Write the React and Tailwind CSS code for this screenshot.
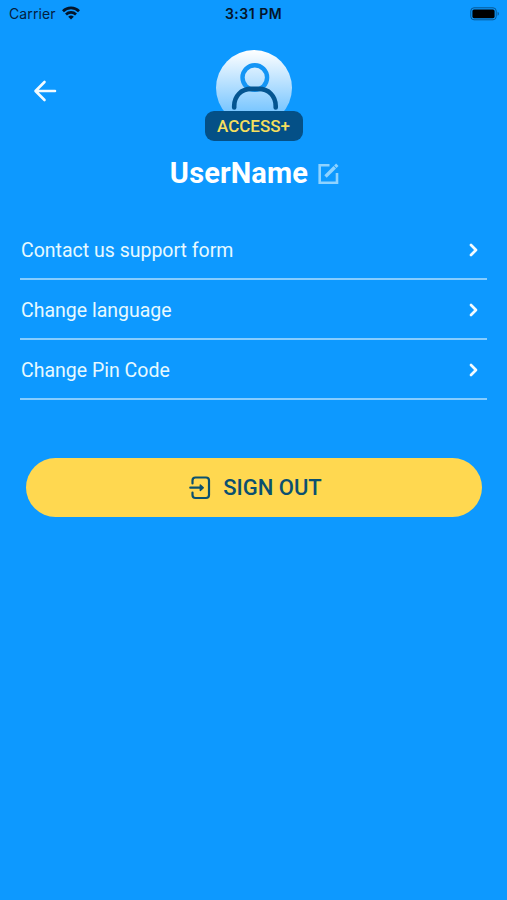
import React from "react";

const menuItems = [
    { id: "contact", label: "Contact us support form" },
    { id: "language", label: "Change language" },
    { id: "pin", label: "Change Pin Code" },
];

const WifiIcon = () => (
    <svg width="18" height="14" viewBox="0 0 18 14" fill="none" stroke="#04152a" strokeWidth="2.7">
        <path d="M1 5.2a11.3 11.3 0 0 1 16 0" />
        <path d="M4 8.5a7.1 7.1 0 0 1 10 0" />
        <path d="M9 13.6 6.2 10.8a4 4 0 0 1 5.6 0z" fill="#04152a" stroke="none" />
    </svg>
);

const BatteryIcon = () => (
    <svg width="30" height="14" viewBox="0 0 30 14" fill="none">
        <rect x="0.8" y="0.8" width="25.4" height="12" rx="3.2" stroke="#075794" strokeWidth="1" />
        <rect x="2.4" y="2.4" width="22.2" height="8.8" rx="1.6" fill="#000" />
        <path d="M27.6 4.8c1.7.6 1.7 3.4 0 4z" fill="#075794" />
    </svg>
);

const BackIcon = () => (
    <svg width="24" height="22" viewBox="0 0 24 22" fill="none" stroke="#f2fbff" strokeWidth="2.6" strokeLinecap="round" strokeLinejoin="round">
        <path d="M22 11H2.6M11.5 2 2.5 11l9 9" />
    </svg>
);

const Avatar = () => (
    <svg width="76" height="76" viewBox="0 0 76 76" fill="none">
        <defs>
            <linearGradient id="avatar-bg" x1="0" y1="0" x2="0" y2="1">
                <stop offset="0" stopColor="#fff" />
                <stop offset="1" stopColor="#5bb9ff" />
            </linearGradient>
        </defs>
        <circle cx="38" cy="38" r="38" fill="url(#avatar-bg)" />
        <circle cx="38.8" cy="27.6" r="12.3" stroke="#1495f5" strokeWidth="4.4" />
        <path d="M18.2 57.5v-1.4c0-10 7-17.2 17-17.2h7.5c10 0 17 7.2 17 17.2v1.4" stroke="#045591" strokeWidth="4.6" strokeLinecap="round" />
    </svg>
);

const EditIcon = () => (
    <svg width="22" height="22" viewBox="0 0 22 22" fill="none" stroke="#8fd3ff">
        <path d="M12.500 2.300H2.700v17.500h17.300V10" strokeWidth="2.600" />
        <path d="M8.500 13.500 17.800 4.200" strokeWidth="3.400" />
        <path d="M18.300 3.700 20.300 1.700" strokeWidth="3.400" />
    </svg>
);

const ChevronIcon = () => (
    <svg width="9" height="14" viewBox="0 0 9 14" fill="none" stroke="#f2fbff" strokeWidth="2.7" strokeLinecap="round" strokeLinejoin="round">
        <path d="M2 2l5 5-5 5" />
    </svg>
);

const SignOutIcon = () => (
    <svg width="22" height="24" viewBox="0 0 22 24" fill="none" stroke="#0b506f" strokeWidth="2.2" strokeLinecap="round" strokeLinejoin="round">
        <path d="M3.500 7.500V4.500c0-2 1-3 3-3h10.500c2 0 3 1 3 3v14.500c0 2-1 3-3 3h-10.500c-2 0-3-1-3-3v-2.500" />
        <path d="M1.300 11.700h11" />
        <path d="M11.300 9l3 2.700-3 2.700z" fill="#0b506f" strokeWidth="1.400" />
    </svg>
);

const StatusBar = () => (
    <div className="grid h-7 grid-cols-3 items-center pl-[9px] pr-[7px] text-[#04203e]">
        <div className="flex items-center gap-[6px]">
            <span className="pb-0.5 font-[Inter,sans-serif] text-[14px] tracking-[0.1px]">Carrier</span>
            <span className="pb-0.5">
                <WifiIcon />
            </span>
        </div>
        <span className="-ml-0.5 pb-0.5 text-center font-[Inter,sans-serif] text-[14px] font-semibold tracking-[0.5px] text-[#04152a]">3:31 PM</span>
        <div className="flex justify-end">
            <BatteryIcon />
        </div>
    </div>
);

const App = () => {
    return (
        <div className="flex h-[900px] w-[507px] flex-col overflow-hidden bg-[#0d99ff] font-[Roboto,sans-serif]">
            <StatusBar />

            {/* Header */}
            <header className="grid h-[113px] grid-cols-[1fr_98px_1fr] pt-[22px]">
                <button className="ml-[33px] mt-[30px] h-[22px] w-6" aria-label="Back">
                    <BackIcon />
                </button>
                <div className="flex flex-col items-center">
                    <Avatar />
                    <div className="relative -mt-[15px] flex h-[30px] w-[98px] shrink-0 items-center justify-center rounded-[9px] bg-[#045087] pt-px">
                        <span className="text-[17px] font-medium text-[#f6df5e]">ACCESS+</span>
                    </div>
                </div>
            </header>

            <div className="flex h-16 items-center justify-center gap-[9px] pl-0.5 pt-px">
                <h1 className="text-[29px] font-bold leading-none tracking-[0.15px] text-white">UserName</h1>
                <EditIcon />
            </div>

            {/* Menu */}
            <ul className="mx-5 mt-[15px]">
                {menuItems.map((item) => (
                    <li key={item.id} className="flex h-[60px] items-center justify-between border-b-2 border-[#86cdff] pl-px pr-[9px] pt-0.5">
                        <span className="pt-px text-[19.5px] text-[#e6f9ff]">{item.label}</span>
                        <ChevronIcon />
                    </li>
                ))}
            </ul>

            <button className="ml-[26px] mr-[25px] mt-[58px] flex h-[59px] items-center justify-center gap-3 rounded-full bg-[#ffd850] pl-[3px] text-[#0b506f]">
                <SignOutIcon />
                <span className="text-[22px] font-medium">SIGN OUT</span>
            </button>
        </div>
    );
};

export default App;
